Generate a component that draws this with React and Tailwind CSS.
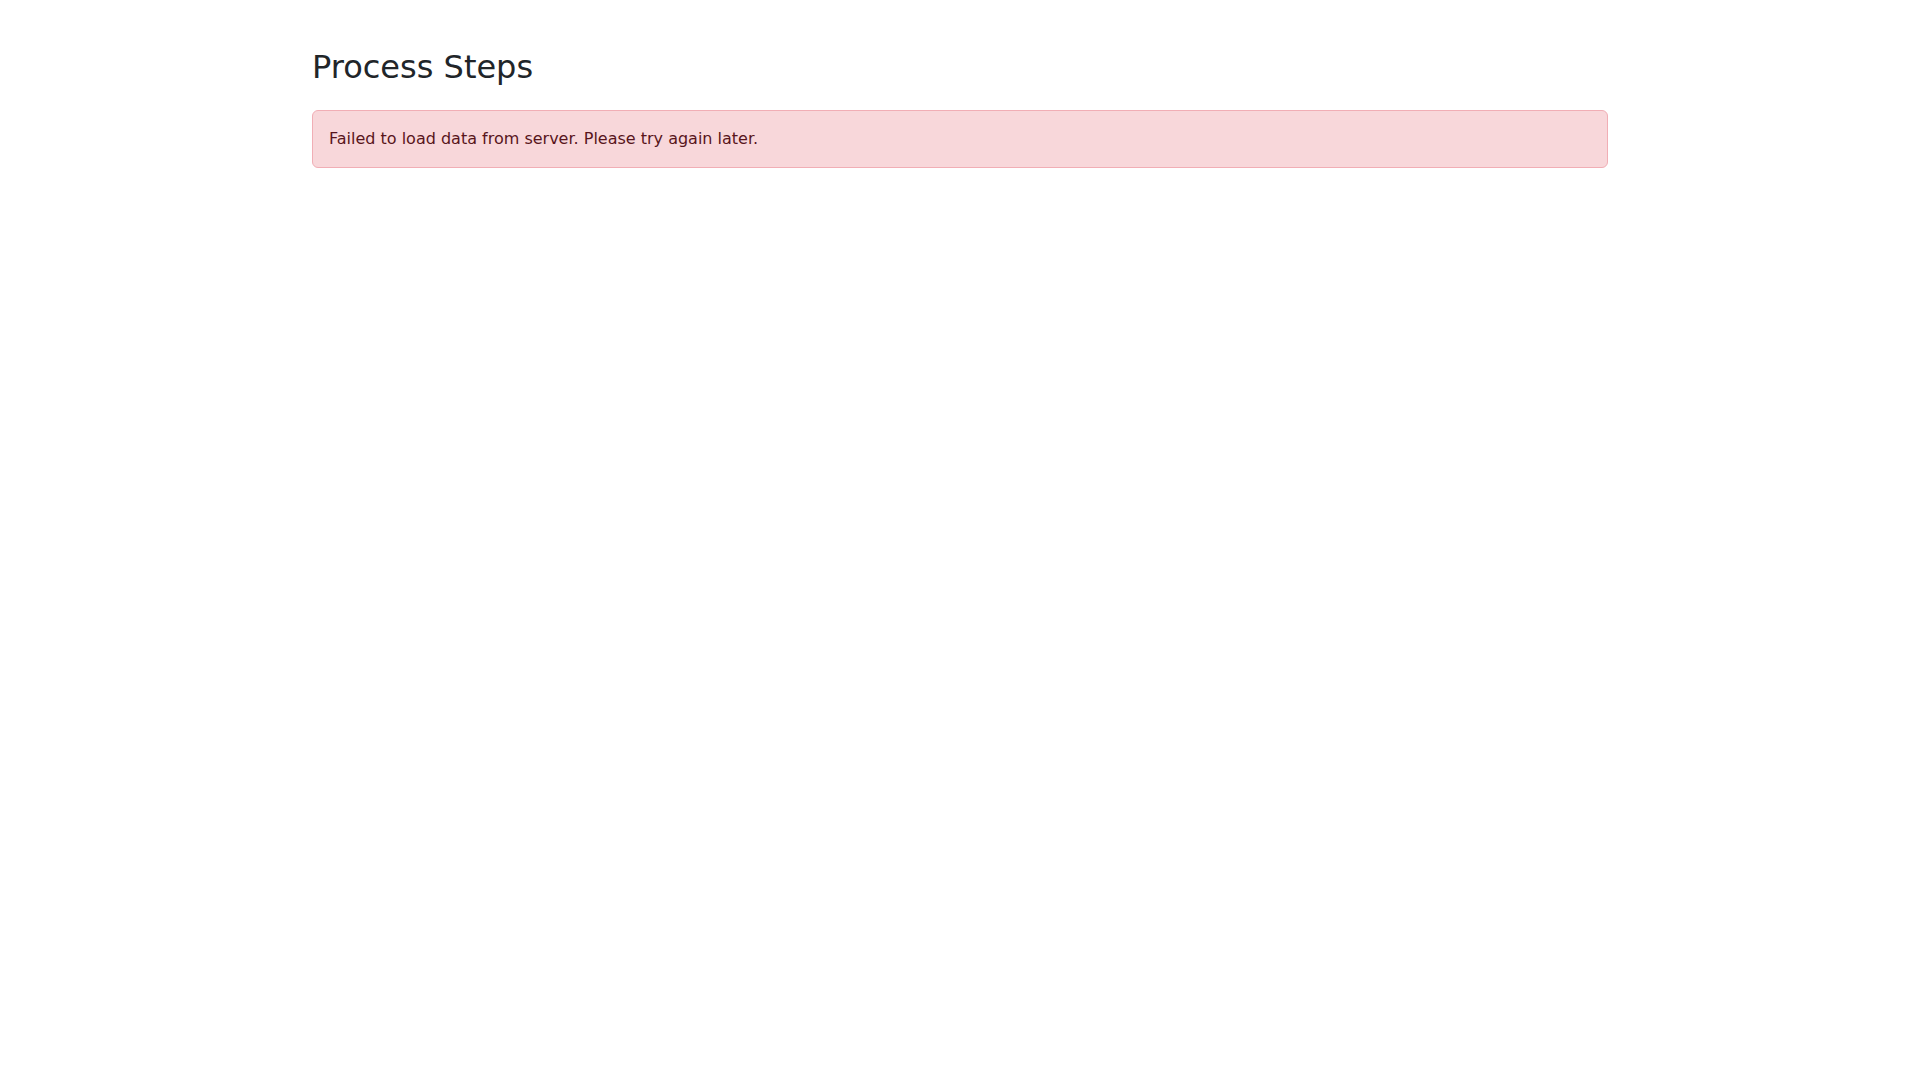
export default function App() {
  return (
    <div
      className="min-h-screen bg-white text-[#212529]"
      style={{ fontFamily: '"DejaVu Sans", sans-serif' }}
    >
      <div className="mx-auto w-[1320px] px-3 pt-12">
        <h2 className="mb-6 text-[32px] leading-[1.2] font-normal">Process Steps</h2>
        <div className="rounded-[6px] border border-[#f1aeb5] bg-[#f8d7da] p-4 text-base leading-6 text-[#58151c]">
          Failed to load data from server. Please try again later.
        </div>
      </div>
    </div>
  );
}
